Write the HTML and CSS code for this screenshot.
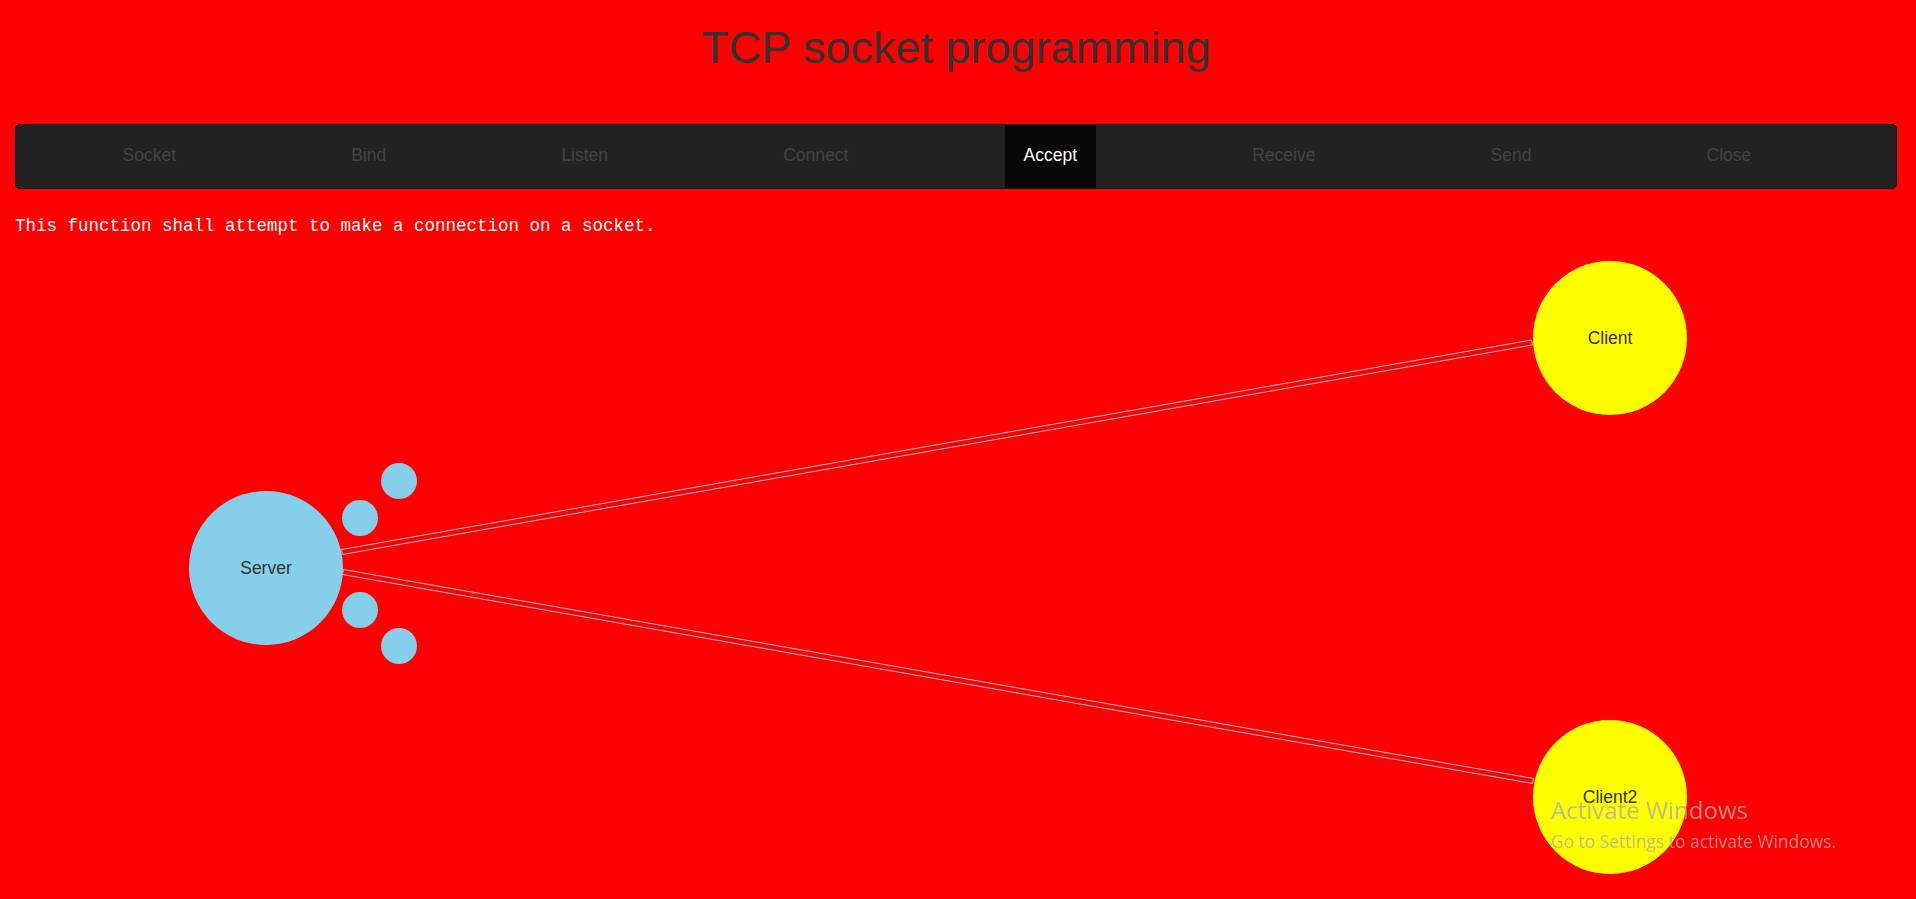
FILE: index.html
```html
<!DOCTYPE html>
<html lang="en">
<head>
<meta charset="utf-8">
<title>TCP socket programming</title>
<link rel="stylesheet" href="styles.css">
</head>
<body>
<h1 class="title">TCP socket programming</h1>
<nav class="navbar">
  <ul class="nav">
    <li><a>Socket</a></li>
    <li><a>Bind</a></li>
    <li><a>Listen</a></li>
    <li><a>Connect</a></li>
    <li class="active"><a>Accept</a></li>
    <li><a>Receive</a></li>
    <li><a>Send</a></li>
    <li><a>Close</a></li>
  </ul>
</nav>
<p class="desc">This function shall attempt to make a connection on a socket.</p>
<div class="stage">
  <svg class="links" viewBox="0 250 1916 649" width="1916" height="649">
    <polygon class="link" points="341.6,549.5 1531.6,340 1532.4,345 342.4,554.5"/>
    <polygon class="link" points="343.4,569.5 1533.4,778.5 1532.6,783.5 342.6,574.5"/>
  </svg>
  <div class="node server"><span>Server</span></div>
  <div class="port port1"></div>
  <div class="port port2"></div>
  <div class="port port3"></div>
  <div class="port port4"></div>
  <div class="node client client1"><span>Client</span></div>
  <div class="node client client2"><span>Client2</span></div>
</div>
<div class="watermark">
  <div class="wm-title">Activate Windows</div>
  <div class="wm-sub">Go to Settings to activate Windows.</div>
</div>
</body>
</html>
```
FILE: styles.css
```css
html, body {
  margin: 0;
  padding: 0;
  overflow: hidden;
}

body {
  background: #ff0000;
  font-family: "Liberation Sans", Arial, sans-serif;
  color: #333;
  width: 1916px;
  height: 899px;
}

.title {
  margin: 0;
  padding: 23px 4px 0 0;
  font-size: 45px;
  line-height: 50px;
  font-weight: normal;
  text-align: center;
  color: #333;
}

.navbar {
  margin: 51px 19px 0 15px;
  height: 65px;
  box-sizing: border-box;
  border: 1px solid #080808;
  border-radius: 5px;
  background: #222;
}

.nav {
  display: flex;
  justify-content: space-around;
  list-style: none;
  margin: 0;
  padding: 0 57px 0 19px;
  height: 63px;
}

.nav a {
  display: block;
  height: 63px;
  padding: 0 18.75px;
  line-height: 61px;
  font-size: 17.5px;
  color: #444;
}

.nav .active a {
  background: #080808;
  color: #fff;
}

.desc {
  margin: 0;
  padding: 27px 0 14px 15px;
  font-family: "Liberation Mono", "Courier New", monospace;
  font-size: 17.5px;
  line-height: 20px;
  color: #fff;
}

.stage {
  position: relative;
  height: 649px;
}

.links {
  position: absolute;
  left: 0;
  top: 0;
}

.link {
  fill: none;
  stroke: #a9c3d8;
  stroke-width: 1;
}

.node {
  position: absolute;
  width: 154px;
  height: 154px;
  border-radius: 50%;
  display: flex;
  align-items: center;
  justify-content: center;
  font-size: 17.5px;
  color: #333;
}

.server {
  left: 189px;
  top: 241px;
  background: #87ceeb;
}

.client {
  left: 1533px;
  background: #ffff00;
}

.client1 {
  top: 11px;
}

.client2 {
  top: 470px;
}

.port {
  position: absolute;
  width: 36px;
  height: 36px;
  border-radius: 50%;
  background: #87ceeb;
}

.port1 { left: 381px; top: 213px; }
.port2 { left: 342px; top: 250px; }
.port3 { left: 342px; top: 342px; }
.port4 { left: 381px; top: 378px; }

.watermark {
  position: fixed;
  left: 1551px;
  top: 795px;
  font-family: "Open Sans", "Noto Sans", sans-serif;
  color: rgba(170, 170, 170, 0.8);
  pointer-events: none;
}

.wm-title {
  font-size: 24px;
  line-height: 30px;
}

.wm-sub {
  margin-top: 3px;
  font-size: 17.4px;
  line-height: 26px;
}
```
